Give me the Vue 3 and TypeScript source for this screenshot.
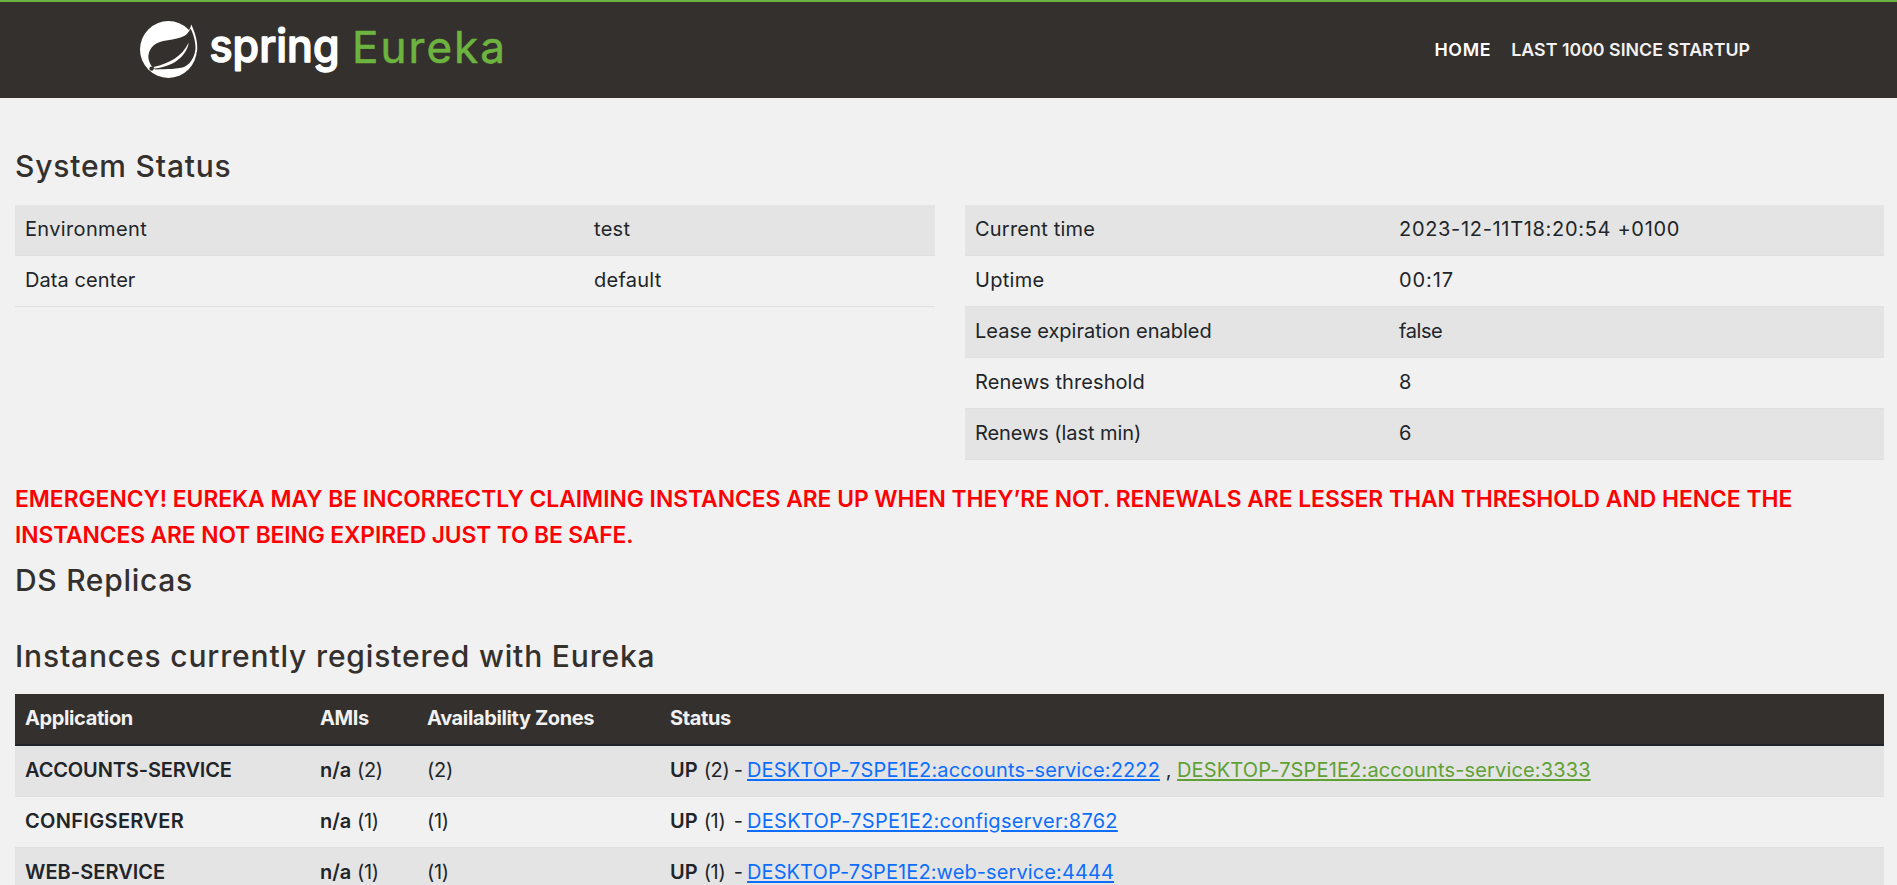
<script setup lang="ts">
interface StatusRow {
  label: string
  value: string
  labelTracking: number
  valueTracking: number
}

interface InstanceLink {
  text: string
  tracking: number
  hovered?: boolean
}

interface Application {
  name: string
  tracking: number
  count: number
  instances: InstanceLink[]
}

const generalRows: StatusRow[] = [
  { label: 'Environment', value: 'test', labelTracking: 0.35, valueTracking: 0.3 },
  { label: 'Data center', value: 'default', labelTracking: 0.08, valueTracking: 0.25 },
]

const runtimeRows: StatusRow[] = [
  { label: 'Current time', value: '2023-12-11T18:20:54 +0100', labelTracking: 0.2, valueTracking: 0.68 },
  { label: 'Uptime', value: '00:17', labelTracking: 0.3, valueTracking: 0.9 },
  { label: 'Lease expiration enabled', value: 'false', labelTracking: 0, valueTracking: -0.4 },
  { label: 'Renews threshold', value: '8', labelTracking: 0.08, valueTracking: 0 },
  { label: 'Renews (last min)', value: '6', labelTracking: -0.08, valueTracking: 0 },
]

const applications: Application[] = [
  {
    name: 'ACCOUNTS-SERVICE',
    tracking: -0.12,
    count: 2,
    instances: [
      { text: 'DESKTOP-7SPE1E2:accounts-service:2222', tracking: 0.146 },
      { text: 'DESKTOP-7SPE1E2:accounts-service:3333', tracking: 0.146, hovered: true },
    ],
  },
  {
    name: 'CONFIGSERVER',
    tracking: 0.33,
    count: 1,
    instances: [{ text: 'DESKTOP-7SPE1E2:configserver:8762', tracking: 0.28 }],
  },
  {
    name: 'WEB-SERVICE',
    tracking: 0.05,
    count: 1,
    instances: [{ text: 'DESKTOP-7SPE1E2:web-service:4444', tracking: 0.1 }],
  },
]

const spacing = (value: number) => ({ letterSpacing: `${value}px` })
</script>

<template>
  <div class="page">
    <header class="navbar">
      <a class="brand" aria-label="Spring Eureka">
        <svg class="logo" width="380" height="70" viewBox="0 0 380 70">
          <circle cx="29.4" cy="35.5" r="28.4" fill="#fff" />
          <path d="M52.4 10.6C55.6 18 59.4 28 58 38L50 40L44 23C48.500 20 51 15.500 52.400 10.600Z" fill="#fff" />
          <path
            d="M51.500 14.500C49 20 46 22.300 40 24C31 26.400 23 26 16.500 30C10 34.200 8 42 10.300 47.500C11 49.700 12 51.500 13.500 53L16.500 55.500C27 55.200 40 55.400 46 52.600C52.500 49 56.300 41 56.500 34C56.600 27 54 19 51.500 14.500Z"
            fill="#34302d"
          />
          <path
            d="M14.500 53C31 48.800 42.500 43 49.800 28.400C48 39.500 38.500 51.300 16 54.600Z"
            fill="#fff"
          />
          <circle cx="12.600" cy="54.600" r="2.200" fill="#34302d" />
          <text class="logo-spring" x="70.500" y="48" textLength="130" lengthAdjust="spacingAndGlyphs">spring</text>
          <text class="logo-eureka" x="213" y="48.500" textLength="153" lengthAdjust="spacing">Eureka</text>
        </svg>
      </a>
      <nav class="links">
        <a class="nav-link active">HOME</a>
        <a class="nav-link">LAST 1000 SINCE STARTUP</a>
      </nav>
    </header>

    <main class="content">
      <h1 class="title system">System Status</h1>
      <div class="status-grid">
        <table class="table general">
          <tbody>
            <tr v-for="row in generalRows" :key="row.label">
              <td class="key"><span :style="spacing(row.labelTracking)">{{ row.label }}</span></td>
              <td><span :style="spacing(row.valueTracking)">{{ row.value }}</span></td>
            </tr>
          </tbody>
        </table>
        <table class="table runtime">
          <tbody>
            <tr v-for="row in runtimeRows" :key="row.label">
              <td class="key"><span :style="spacing(row.labelTracking)">{{ row.label }}</span></td>
              <td><span :style="spacing(row.valueTracking)">{{ row.value }}</span></td>
            </tr>
          </tbody>
        </table>
      </div>

      <h4 class="warning">
        EMERGENCY! EUREKA MAY BE INCORRECTLY CLAIMING INSTANCES ARE UP WHEN THEY’RE NOT. RENEWALS ARE
        LESSER THAN THRESHOLD AND HENCE THE <span class="tail">INSTANCES ARE NOT BEING EXPIRED JUST TO BE SAFE.</span>
      </h4>

      <h1 class="title replicas">DS Replicas</h1>
      <h1 class="title instances">Instances currently registered with Eureka</h1>

      <table class="table apps">
        <thead>
          <tr>
            <th class="col-app">Application</th>
            <th class="col-ami">AMIs</th>
            <th class="col-zone">Availability Zones</th>
            <th>Status</th>
          </tr>
        </thead>
        <tbody>
          <tr v-for="app in applications" :key="app.name">
            <td><b :style="spacing(app.tracking)">{{ app.name }}</b></td>
            <td><b>n/a</b> <span class="count">({{ app.count }})</span></td>
            <td><span class="count">({{ app.count }})</span></td>
            <td>
              <span class="summary"><b>UP</b> <span class="count">({{ app.count }})</span> <span class="dash">-</span></span>
              <template v-for="(instance, i) in app.instances" :key="instance.text">
                <span v-if="i > 0"> , </span>
                <a
                  class="instance"
                  :class="{ hovered: instance.hovered }"
                  :style="spacing(instance.tracking)"
                >{{ instance.text }}</a>
              </template>
            </td>
          </tr>
        </tbody>
      </table>
    </main>
  </div>
</template>

<style>
body {
  margin: 0;
  background: #f1f1f1;
}
</style>

<style scoped>
.page {
  height: 885px;
  overflow: hidden;
  background: #f1f1f1;
  color: #212529;
  font: 400 20px/30px Inter, 'Open Sans', sans-serif;
}

.navbar {
  box-sizing: border-box;
  height: 98px;
  display: flex;
  justify-content: space-between;
  align-items: flex-start;
  padding: 0 147px 0 139px;
  border-top: 2px solid #6db33f;
  background: #34302d;
}

.brand {
  display: block;
  padding-top: 12px;
}

.logo {
  display: block;
}

.logo-spring {
  fill: #fff;
  stroke: #fff;
  stroke-width: 1.5px;
  stroke-linejoin: round;
  font: 500 45px Inter, sans-serif;
}

.logo-eureka {
  fill: #6db33f;
  stroke: #6db33f;
  stroke-width: 0.6px;
  stroke-linejoin: round;
  font: 400 44px Inter, sans-serif;
}

.links {
  display: flex;
  gap: 20px;
  padding-top: 32px;
}

.nav-link {
  color: #f1f1f1;
  font-size: 17.8px;
  font-weight: 600;
  line-height: 32px;
  white-space: nowrap;
}

.nav-link.active {
  color: #fff;
  letter-spacing: 0.7px;
}

.content {
  padding: 50px 13px 0 15px;
}

.title {
  margin: 0;
  color: #34302d;
  font-size: 30px;
  font-weight: 500;
  line-height: 36px;
  letter-spacing: 0.8px;
}

.status-grid {
  display: grid;
  grid-template-columns: 920px 919px;
  column-gap: 30px;
  align-items: start;
  margin-top: 21px;
}

.table {
  width: 100%;
  border-collapse: separate;
  border-spacing: 0;
  table-layout: fixed;
}

.table td {
  box-sizing: border-box;
  height: 51px;
  padding: 9px 10px 11px;
  border-bottom: 1px solid #dee0e1;
  white-space: nowrap;
}

.table tbody tr:nth-child(odd) td {
  background: #e4e4e4;
}

.general .key {
  width: 569px;
}

.runtime .key {
  width: 424px;
}

.warning {
  margin: 21px 0 0;
  color: #f00;
  font-size: 22.8px;
  font-weight: 600;
  line-height: 36px;
}

.tail {
  letter-spacing: -0.1px;
}

.title.replicas {
  margin-top: 9px;
  letter-spacing: 0.7px;
}

.title.instances {
  margin-top: 40px;
  letter-spacing: 0.84px;
}

.apps {
  margin-top: 20px;
}

.apps th {
  box-sizing: border-box;
  height: 52px;
  padding: 9px 10px 11px;
  border-bottom: 2px solid #212529;
  background: #34302d;
  color: #f1f1f1;
  font-weight: 700;
  letter-spacing: -0.38px;
  text-align: left;
}

.col-app {
  width: 295px;
}

.col-ami {
  width: 107px;
}

.col-zone {
  width: 243px;
}

b {
  font-weight: 600;
}

.count {
  letter-spacing: -0.3px;
}

.summary {
  display: inline-flex;
  align-items: baseline;
  gap: 6px;
  width: 77px;
}

.summary .count {
  width: 24px;
}

.instance {
  color: #0d6efd;
  text-decoration: underline;
  text-decoration-thickness: 2px;
  text-underline-offset: 2px;
}

.instance.hovered {
  color: #5fa134;
}
</style>
